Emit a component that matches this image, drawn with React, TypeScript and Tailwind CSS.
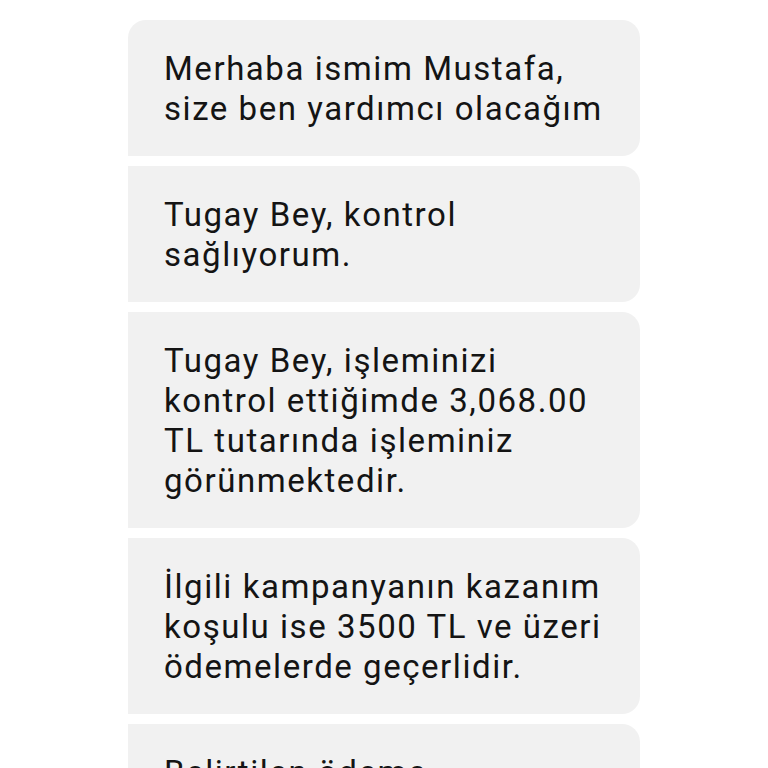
const messages = [
  ["Merhaba ismim Mustafa,", "size ben yardımcı olacağım"],
  ["Tugay Bey, kontrol", "sağlıyorum."],
  [
    "Tugay Bey, işleminizi",
    "kontrol ettiğimde 3,068.00",
    "TL tutarında işleminiz",
    "görünmektedir.",
  ],
  ["İlgili kampanyanın kazanım", "koşulu ise 3500 TL ve üzeri", "ödemelerde geçerlidir."],
  ["Belirtilen ödeme", "tutarının altında kaldığı için"],
];

const App = () => {
  return (
    <div
      className="w-[768px] h-[768px] overflow-hidden bg-white pt-[20px] pl-[128px]"
      style={{ fontFamily: "Roboto, 'Noto Sans', sans-serif" }}
    >
      <div className="flex flex-col gap-[10px] w-[512px]">
        {messages.map((lines, i) => (
          <div
            key={i}
            className={`bg-[#f1f1f1] rounded-r-[18px] pl-[36px] pr-[20px] pt-[29px] pb-[27px] text-[33px] leading-[40px] tracking-[1.55px] text-[#141414] ${
              i === 0 ? "rounded-tl-[18px]" : ""
            }`}
          >
            {lines.map((l, j) => (
              <div key={j} className="whitespace-nowrap">
                {l}
              </div>
            ))}
          </div>
        ))}
      </div>
    </div>
  );
};

export default App;
